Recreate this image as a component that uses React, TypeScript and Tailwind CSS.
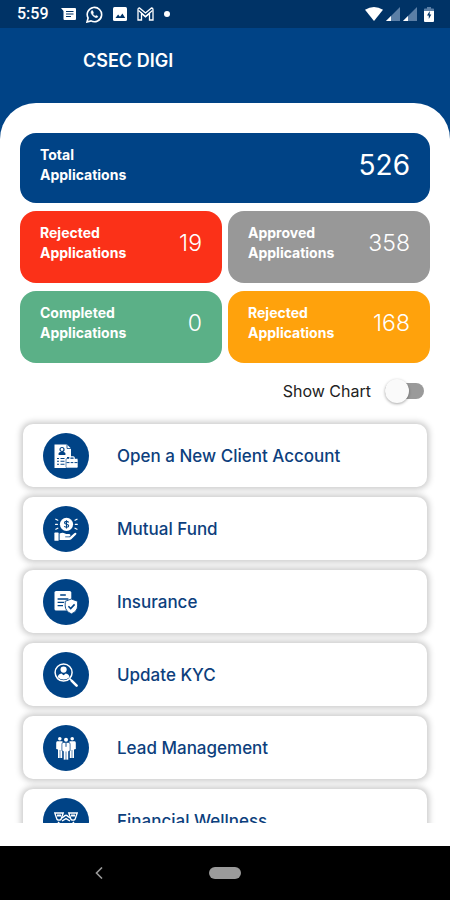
import React, { useState } from 'react';

const stats = [
  { label: 'Rejected', value: 19, color: 'bg-[#fb3118]' },
  { label: 'Approved', value: 358, color: 'bg-[#989898]' },
  { label: 'Completed', value: 0, color: 'bg-[#5bb087]' },
  { label: 'Rejected', value: 168, color: 'bg-[#ffa20c]' },
];

const AccountIcon = () => (
  <svg viewBox="0 0 24 24" className="size-6" fill="#fff">
    <path d="M0.5 0.5h12.5l4 4V13h-4v11H0.5z" />
    <path d="M13 0.5v4h4" fill="none" stroke="#004386" strokeWidth="0.8" />
    <circle cx="8" cy="5.5" r="2" fill="none" stroke="#004386" strokeWidth="1.2" />
    <path d="M4.6 11V9.6q0-1.6 1.8-1.6h3.2q1.8 0 1.8 1.6V11z" fill="#004386" />
    <path d="M3 14.5h2m1.5 0h4M3 17.3h2m1.5 0h4M3 20.2h2m1.5 0h4" stroke="#004386" strokeWidth="1.1" />
    <rect x="12" y="14.5" width="12" height="9.5" rx="1.2" stroke="#004386" strokeWidth="0.6" />
    <path d="M15.8 15v-1.2q0-1 1-1h2.4q1 0 1 1V15" fill="none" stroke="#fff" strokeWidth="1.2" />
    <path d="M12.5 18.6h3m1.2 0h2.6m1.2 0h3" stroke="#004386" strokeWidth="1" />
  </svg>
);

const FundIcon = () => (
  <svg viewBox="0 0 24 24" className="size-6" fill="#fff">
    <circle cx="12.5" cy="7.3" r="6.6" />
    <path d="M14.6 5.4q-.5-1-2.1-1-2 0-2 1.4 0 1.1 2 1.4 2.2.3 2.2 1.6 0 1.4-2.2 1.4-1.8 0-2.2-1.1M12.5 3.2v8.2" fill="none" stroke="#004386" strokeWidth="1.1" />
    <path d="M1.8 2.2l2 1M1.5 7.3h2M1.8 12.2l2-1M23 2.2l-2 1M23.3 7.3h-2M23 12.2l-2-1" stroke="#fff" strokeWidth="1.2" strokeLinecap="round" />
    <rect x="0.4" y="15.6" width="4.2" height="8.2" rx="0.6" />
    <path d="M5.6 16.6q3-1.600 5.400-.2l1.200.7h3q1.400.1 1.200 1.400-.2.9-1.500.9h-3.700v.8h4.600l4.500-4q1-.8 1.800-.2.7.7 0 1.500l-4.800 4.800q-.8.8-2 .8H5.600z" />
  </svg>
);

const InsuranceIcon = () => (
  <svg viewBox="0 0 24 24" className="size-6" fill="#fff">
    <rect x="0.5" y="1" width="16.8" height="19.5" rx="1.6" />
    <path d="M6.2 5h5.6M3.6 9h10.8M3.6 12.4h6.4M3.6 15.6h5.4" stroke="#004386" strokeWidth="1.3" />
    <path d="M17.4 9l6.2 2.3v4.6q0 5.2-6.2 8-6.2-2.8-6.2-8v-4.6z" stroke="#004386" strokeWidth="0.9" />
    <path d="M14.4 16.3l2.3 2.3 3.9-4.2" fill="none" stroke="#004386" strokeWidth="1.6" />
  </svg>
);

const KycIcon = () => (
  <svg viewBox="0 0 24 24" className="size-6" fill="#fff">
    <circle cx="9.6" cy="9.6" r="8.5" fill="none" stroke="#fff" strokeWidth="1.5" />
    <circle cx="9.6" cy="6.6" r="3.1" />
    <path d="M3.8 14.2q.2-3 3.6-3.6l2.2 1.6 2.2-1.6q3.4.6 3.6 3.6-2.4 2.4-5.8 2.4t-5.8-2.4z" />
    <path d="M15.8 15.8l2 2" stroke="#fff" strokeWidth="1.6" />
    <path d="M17.8 17.8l4.8 4.8" stroke="#fff" strokeWidth="2.6" strokeLinecap="round" />
  </svg>
);

const LeadIcon = () => (
  <svg viewBox="0 0 24 24" className="size-6" fill="#fff">
    <circle cx="5.8" cy="2.7" r="1.8" />
    <circle cx="18.2" cy="2.7" r="1.8" />
    <path d="M3.2 5.2h5.2l.6 1.8-.8 5v10H4V13.6L2.2 13V7q0-1.8 1-1.8z" />
    <path d="M20.8 5.2h-5.2L15 7l.8 5v10H20v-8.4l1.8-.6V7q0-1.8-1-1.8z" />
    <path d="M9.2 6.4h5.6q1.3 0 1.3 1.8v6.6l-1.5.6V24H9.4v-8.6l-1.5-.6V8.2q0-1.8 1.3-1.8z" stroke="#004386" strokeWidth="0.7" />
    <circle cx="12" cy="3.8" r="2" />
    <path d="M12 15.5V24M6 14v8M18 14v8" stroke="#004386" strokeWidth="0.6" />
    <path d="M12 6.8v4" stroke="#004386" strokeWidth="0.9" />
  </svg>
);

const WellnessIcon = () => (
  <svg viewBox="0 0 24 24" className="size-6" fill="none" stroke="#fff" strokeWidth="1.4">
    <path d="M0.8 4h8.4L7 10.4q-2 1.4-4 0z" />
    <path d="M14.8 4h8.4L21 10.4q-2 1.4-4 0z" />
    <path d="M3 6.4h4M17 6.4h4" strokeWidth="2" />
    <path d="M8 9l3-2.4q1-.8 2 0L16 9M8 12l4-2.4 4 2.4" />
    <path d="M4 13l6 6q2 1.6 4 0l6-6" />
  </svg>
);

const menu = [
  { title: 'Open a New Client Account', Icon: AccountIcon },
  { title: 'Mutual Fund', Icon: FundIcon },
  { title: 'Insurance', Icon: InsuranceIcon },
  { title: 'Update KYC', Icon: KycIcon },
  { title: 'Lead Management', Icon: LeadIcon },
  { title: 'Financial Wellness', Icon: WellnessIcon },
];

const Signal = () => (
  <svg viewBox="0 0 14 14" className="size-3.5">
    <path d="M14 0v14H0z" fill="#5b7fa6" />
    <path d="M5 9v5H0z" fill="#fff" />
  </svg>
);

const StatusBar = () => (
  <div className="flex h-7 shrink-0 items-center justify-between bg-[#003366] pl-[17px] pr-4 text-white">
    <div className="flex items-center gap-2.5">
      <span className="mr-0.5 font-[Roboto] text-base font-medium">5:59</span>
      <svg viewBox="0 0 15 14" className="h-3.5 w-[15px]">
        <path d="M0 1h14q1 0 1 1v10q0 1-1 1H3.5q-1 0-1-1V4z" fill="#fff" />
        <path d="M5 4.5h7.5M5 7h7.5M5 9.5h5" stroke="#003366" strokeWidth="1.2" />
      </svg>
      <svg viewBox="0 0 17 17" className="size-[17px]" fill="none" stroke="#fff">
        <path d="M1 16l1.1-4A7.2 7.2 0 1 1 5 14.9z" strokeWidth="1.6" />
        <path d="M5.8 4.6q-1.5 1.2-.4 3.2 1.5 2.7 4 3.7 1.8.6 2.7-.9l-1.900-1.200-1 .9q-1.600-.7-2.500-2.300l.8-1-.8-2.200z" fill="#fff" strokeWidth="0.5" />
      </svg>
      <svg viewBox="0 0 14 14" className="size-3.5">
        <rect width="14" height="14" rx="1.5" fill="#fff" />
        <path d="M2.5 11l2.6-3.4L7 9.8l2.4-3.2 2.8 4.4z" fill="#003366" />
      </svg>
      <svg viewBox="0 0 17 14" className="h-3.5 w-[17px]" fill="none" stroke="#fff" strokeWidth="1.3">
        <path d="M1 13V2.5Q1 1 2.5 1L8.5 6l6-5Q16 1 16 2.5V13h-3.5V6.5l-4 3.5-4-3.5V13z" />
        <path d="M1.5 3.5l7 6 7-6" />
      </svg>
      <span className="size-1.5 rounded-full bg-white" />
    </div>
    <div className="flex items-center gap-[3px]">
      <svg viewBox="0 0 18 14" className="h-3.5 w-[18px]">
        <path d="M0 2.8Q9-2.6 18 2.8L9 14z" fill="#fff" />
      </svg>
      <Signal />
      <Signal />
      <svg viewBox="0 0 10 15" className="ml-1 h-[15px] w-2.5">
        <path d="M3 0h4v1.5h2.2q.8 0 .8.8V4H0V2.3q0-.8.8-.8H3z" fill="#5b7fa6" />
        <path d="M0 4h10v10q0 1-1 1H1q-1 0-1-1z" fill="#fff" />
        <path d="M5.8 4L3 8.5h1.8V12L7.3 7.5H5.6z" fill="#003366" />
      </svg>
    </div>
  </div>
);

const App = () => {
  const [showChart, setShowChart] = useState(false);

  return (
    <div className="flex h-screen flex-col overflow-hidden bg-[#004386] font-[Inter,sans-serif]">
      <StatusBar />
      <header className="h-[75px] shrink-0 pl-[83px] pt-[21px]">
        <h1 className="text-lg font-semibold leading-6 text-white">CSEC DIGI</h1>
      </header>

      <main className="flex min-h-0 flex-1 flex-col rounded-t-[36px] bg-white pb-[23px] pt-[30px]">
        <section className="flex flex-col gap-2 px-5">
          <div className="flex items-center justify-between rounded-2xl bg-[#004386] px-5 pb-[18px] pt-3 text-white">
            <p className="text-sm font-bold leading-5">Total<br />Applications</p>
            <span className="text-[28px] leading-8">526</span>
          </div>
          <div className="grid grid-cols-2 gap-x-1.5 gap-y-2">
            {stats.map((stat, i) => (
              <div key={i} className={`flex items-center justify-between rounded-2xl px-5 pb-5 pt-3 text-white ${stat.color}`}>
                <p className="text-sm font-bold leading-5">{stat.label}<br />Applications</p>
                <span className="text-[23px] font-light leading-8">{stat.value}</span>
              </div>
            ))}
          </div>
        </section>

        <label className="flex items-center justify-end gap-3.5 pb-2.5 pl-5 pr-[26px] pt-4 text-base leading-6 text-[#222]">
          Show Chart
          <input
            type="checkbox"
            checked={showChart}
            onChange={() => setShowChart(!showChart)}
            className="flex h-4 w-[39px] appearance-none items-center rounded-full bg-[#9a9a9a] before:size-6 before:shrink-0 before:rounded-full before:bg-[#fafafa] before:shadow-[0_1px_3px_rgba(0,0,0,0.35)] before:content-[''] checked:justify-end checked:bg-[#7fa1c3]"
          />
        </label>

        <nav className="flex min-h-0 flex-1 flex-col gap-2.5 overflow-y-auto px-[23px] pt-[11px] [scrollbar-width:none]">
          {menu.map(({ title, Icon }) => (
            <button
              key={title}
              className="flex h-[63px] shrink-0 items-center gap-7 rounded-[10px] bg-white px-5 text-left shadow-[0_0_6px_2px_rgba(0,0,0,0.22)]"
            >
              <span className="flex size-[46px] items-center justify-center rounded-full bg-[#004386]">
                <Icon />
              </span>
              <span className="text-[17px] font-medium leading-6 text-[#0d3f7d]">{title}</span>
            </button>
          ))}
        </nav>
      </main>

      <footer className="grid h-[54px] shrink-0 grid-cols-[1fr_auto_1fr] items-center bg-black">
        <button aria-label="Back" className="mr-3 justify-self-center">
          <svg viewBox="0 0 8 12" className="h-3 w-2" fill="none" stroke="#9a9a9a" strokeWidth="1.6">
            <path d="M7 0.5L1.500 6L7 11.500" />
          </svg>
        </button>
        <button aria-label="Home" className="h-3 w-8 rounded-full bg-[#9a9a9a]" />
      </footer>
    </div>
  );
};

export default App;
